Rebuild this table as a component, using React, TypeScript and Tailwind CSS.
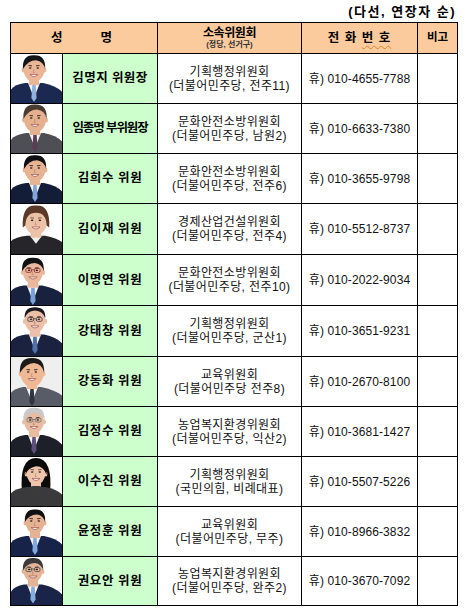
import React from "react";

type Photo = {
  hx: number;
  hy: number;
  skin: string;
  hair: string;
  style: "short" | "bob" | "long" | "thin";
  suit: string;
  tie?: string;
  shirt?: string;
  glasses?: string;
  bg?: string;
  fw?: number;
};

type Row = {
  name: string;
  track: string;
  c1: string;
  c2: string;
  phone: string;
  h: string;
  photo: Photo;
};

function Portrait({ p }: { p: Photo }) {
  const { hx, hy, skin, hair, style, suit } = p;
  const fw = p.fw ?? 10;
  const fh = fw * 1.22;
  const female = style === "bob" || style === "long";
  return (
    <svg viewBox="0 0 51 49" className="block h-full w-full" preserveAspectRatio="xMidYMid slice">
      <rect x="0" y="0" width="51" height="49" fill={p.bg ?? "#ffffff"} />
      {style === "long" && (
        <path
          d={`M${hx - 14} ${hy + 20} Q${hx - 17} ${hy - 15} ${hx} ${hy - 15} Q${hx + 17} ${hy - 15} ${hx + 14} ${hy + 20} Z`}
          fill={hair}
        />
      )}
      <path
        d={`M-2 49 L-2 40 Q0 ${hy + 16} ${hx - 9} ${hy + 14} L${hx + 9} ${hy + 14} Q${hx + 24} ${hy + 17} 53 40 L53 49 Z`}
        fill={suit}
      />
      {!female && (
        <>
          <path d={`M${hx - 6} ${hy + 14} L${hx} ${hy + 29} L${hx + 6} ${hy + 14} Z`} fill={p.shirt ?? "#f4f4f4"} />
          <path
            d={`M${hx - 1.7} ${hy + 16} L${hx + 1.7} ${hy + 16} L${hx + 2.6} ${hy + 29} L${hx} ${hy + 33} L${hx - 2.6} ${hy + 29} Z`}
            fill={p.tie ?? "#6f95cf"}
          />
        </>
      )}
      {style === "bob" && (
        <path d={`M${hx - 6} ${hy + 14} L${hx} ${hy + 22} L${hx + 6} ${hy + 14} Z`} fill="#f1efe9" />
      )}
      <rect x={hx - 5} y={hy + 7} width="10" height="9" fill={skin} />
      {style === "long" && <rect x={hx - 6} y={hy + 13} width="12" height="9" rx="3" fill="#3b3b3b" />}
      <ellipse cx={hx - fw - 0.3} cy={hy + 1} rx="1.6" ry="2.6" fill={skin} />
      <ellipse cx={hx + fw + 0.3} cy={hy + 1} rx="1.6" ry="2.6" fill={skin} />
      <ellipse cx={hx} cy={hy} rx={fw} ry={fh} fill={skin} />
      {style === "short" && (
        <path
          d={`M${hx - fw - 0.6} ${hy} Q${hx - fw - 1.5} ${hy - fh - 1.5} ${hx} ${hy - fh - 1} Q${hx + fw + 1.5} ${hy - fh - 1.5} ${hx + fw + 0.6} ${hy} Q${hx + fw - 1} ${hy - fh + 5} ${hx + 2} ${hy - fh + 4} Q${hx - 6} ${hy - fh + 4} ${hx - fw - 0.6} ${hy} Z`}
          fill={hair}
        />
      )}
      {style === "thin" && (
        <path
          d={`M${hx - fw} ${hy - 2} Q${hx - fw - 1} ${hy - fh - 0.5} ${hx} ${hy - fh - 0.5} Q${hx + fw + 1} ${hy - fh - 0.5} ${hx + fw} ${hy - 2} Q${hx + fw - 2} ${hy - fh + 3} ${hx} ${hy - fh + 2.5} Q${hx - fw + 2} ${hy - fh + 3} ${hx - fw} ${hy - 2} Z`}
          fill={hair}
        />
      )}
      {style === "bob" && (
        <path
          d={`M${hx - fw - 2} ${hy + 6} Q${hx - fw - 3} ${hy - fh - 3} ${hx} ${hy - fh - 2} Q${hx + fw + 3} ${hy - fh - 3} ${hx + fw + 2} ${hy + 6} L${hx + fw - 0.5} ${hy + 4} Q${hx + fw - 1} ${hy - fh + 5} ${hx} ${hy - fh + 5} Q${hx - fw + 1} ${hy - fh + 5} ${hx - fw + 0.5} ${hy + 4} Z`}
          fill={hair}
        />
      )}
      {style === "long" && (
        <path
          d={`M${hx - fw - 1} ${hy + 2} Q${hx - fw - 1} ${hy - fh - 2} ${hx + 1} ${hy - fh - 2} Q${hx + fw + 2} ${hy - fh - 1} ${hx + fw + 1} ${hy + 2} Q${hx + fw - 2} ${hy - fh + 4} ${hx - 1} ${hy - fh + 5} Q${hx - fw + 1} ${hy - 5} ${hx - fw - 1} ${hy + 2} Z`}
          fill={hair}
        />
      )}
      <ellipse cx={hx - 3.8} cy={hy - 1} rx="1.3" ry="0.8" fill="#2a1e1a" />
      <ellipse cx={hx + 3.8} cy={hy - 1} rx="1.3" ry="0.8" fill="#2a1e1a" />
      <path d={`M${hx - 5.5} ${hy - 3.5} L${hx - 2} ${hy - 3.2} M${hx + 2} ${hy - 3.2} L${hx + 5.5} ${hy - 3.5}`} stroke={female ? "#6b4b3b" : "#2a1e1a"} strokeWidth="0.9" />
      <path d={`M${hx} ${hy} L${hx - 0.8} ${hy + 3.5} L${hx + 0.8} ${hy + 3.5}`} stroke="#b07a62" strokeWidth="0.6" fill="none" />
      <path
        d={`M${hx - 4} ${hy + 5.5} Q${hx} ${hy + 9.5} ${hx + 4} ${hy + 5.5} Z`}
        fill="#fafafa"
        stroke="#a3524a"
        strokeWidth="0.7"
      />
      {p.glasses && (
        <g fill="none" stroke={p.glasses} strokeWidth="0.8">
          <rect x={hx - 7} y={hy - 2.8} width="5.6" height="3.8" rx="1.2" />
          <rect x={hx + 1.4} y={hy - 2.8} width="5.6" height="3.8" rx="1.2" />
          <path d={`M${hx - 1.4} ${hy - 1.5} L${hx + 1.4} ${hy - 1.5}`} />
        </g>
      )}
    </svg>
  );
}

const rows: Row[] = [
  {
    name: "김명지 위원장",
    track: "tracking-[0.4px]",
    c1: "기획행정위원회",
    c2: "(더불어민주당, 전주11)",
    phone: "휴) 010-4655-7788",
    h: "h-[50px]",
    photo: { hx: 23, hy: 15, skin: "#e9b796", hair: "#15161a", style: "short", suit: "#1b2850", tie: "#8fb0dc", fw: 10.5 },
  },
  {
    name: "임종명 부위원장",
    track: "tracking-[-1.1px]",
    c1: "문화안전소방위원회",
    c2: "(더불어민주당, 남원2)",
    phone: "휴) 010-6633-7380",
    h: "h-[50px]",
    photo: { hx: 24, hy: 15, skin: "#e4b08e", hair: "#4a3c33", style: "short", suit: "#4e4f55", tie: "#5b3b55", fw: 11 },
  },
  {
    name: "김희수 위원",
    track: "tracking-[0.6px]",
    c1: "문화안전소방위원회",
    c2: "(더불어민주당, 전주6)",
    phone: "휴) 010-3655-9798",
    h: "h-[50px]",
    photo: { hx: 24, hy: 15, skin: "#e7b493", hair: "#101014", style: "short", suit: "#141d38", tie: "#7fa6dc", fw: 10.5 },
  },
  {
    name: "김이재 위원",
    track: "tracking-[0.6px]",
    c1: "경제산업건설위원회",
    c2: "(더불어민주당, 전주4)",
    phone: "휴) 010-5512-8737",
    h: "h-[51px]",
    photo: { hx: 25, hy: 17, skin: "#edc3a8", hair: "#5a3a28", style: "bob", suit: "#26252a", fw: 11 },
  },
  {
    name: "이명연 위원",
    track: "tracking-[0.6px]",
    c1: "문화안전소방위원회",
    c2: "(더불어민주당, 전주10)",
    phone: "휴) 010-2022-9034",
    h: "h-[51px]",
    photo: { hx: 22, hy: 16, skin: "#eab89c", hair: "#121214", style: "short", suit: "#18223f", tie: "#7aa2da", glasses: "#8a2f3a", fw: 10 },
  },
  {
    name: "강태창 위원",
    track: "tracking-[0.6px]",
    c1: "기획행정위원회",
    c2: "(더불어민주당, 군산1)",
    phone: "휴) 010-3651-9231",
    h: "h-[51px]",
    photo: { hx: 24, hy: 14, skin: "#ecc0a8", hair: "#1a1a1e", style: "thin", suit: "#1a2240", tie: "#4f74ad", glasses: "#3a3a3a", fw: 10 },
  },
  {
    name: "강동화 위원",
    track: "tracking-[0.6px]",
    c1: "교육위원회",
    c2: "(더불어민주당 전주8)",
    phone: "휴) 010-2670-8100",
    h: "h-[50px]",
    photo: { hx: 21, hy: 16, skin: "#f0b995", hair: "#1e1a18", style: "short", suit: "#585c66", tie: "#2f3440", bg: "#efefef", fw: 11.5 },
  },
  {
    name: "김정수 위원",
    track: "tracking-[0.6px]",
    c1: "농업복지환경위원회",
    c2: "(더불어민주당, 익산2)",
    phone: "휴) 010-3681-1427",
    h: "h-[50px]",
    photo: { hx: 23, hy: 14, skin: "#e7bca2", hair: "#c9c9c9", style: "short", suit: "#1d1f29", tie: "#5c4f7a", glasses: "#6b6b6b", fw: 10 },
  },
  {
    name: "이수진 위원",
    track: "tracking-[0.6px]",
    c1: "기획행정위원회",
    c2: "(국민의힘, 비례대표)",
    phone: "휴) 010-5507-5226",
    h: "h-[50px]",
    photo: { hx: 25, hy: 16, skin: "#eec4ab", hair: "#0c0b0b", style: "long", suit: "#3a3a3c", fw: 9.5 },
  },
  {
    name: "윤정훈 위원",
    track: "tracking-[0.6px]",
    c1: "교육위원회",
    c2: "(더불어민주당, 무주)",
    phone: "휴) 010-8966-3832",
    h: "h-[50px]",
    photo: { hx: 24, hy: 15, skin: "#e6b392", hair: "#101012", style: "short", suit: "#172349", tie: "#7fa9e0", fw: 9.5 },
  },
  {
    name: "권요안 위원",
    track: "tracking-[0.6px]",
    c1: "농업복지환경위원회",
    c2: "(더불어민주당, 완주2)",
    phone: "휴) 010-3670-7092",
    h: "h-[49px]",
    photo: { hx: 22, hy: 14, skin: "#e5b497", hair: "#3c3a3a", style: "short", suit: "#1a2448", tie: "#86acdc", glasses: "#4a4a4a", fw: 9.5 },
  },
];

export default function App() {
  return (
    <div className="w-[467px] h-[608px] bg-white text-black font-['Liberation_Sans','Noto_Sans_CJK_KR',sans-serif] overflow-hidden">
      <div className="h-[22px] flex items-center justify-end pr-[11px] pt-[1px]">
        <span className="text-[13px] font-bold leading-none tracking-[1.5px]">(다선, 연장자 순)</span>
      </div>
      <div className="ml-[10px] w-[448px] border-t border-l border-black grid grid-cols-[52px_95px_144px_116px_40px]">
        {/* header */}
        <div className="col-span-2 h-[31px] bg-[#fbcb9e] border-r border-b border-black flex items-center justify-center gap-[38px] text-[12.5px] font-bold leading-none pr-[5px]">
          <span>성</span>
          <span>명</span>
        </div>
        <div className="h-[31px] bg-[#fbcb9e] border-r border-b border-black flex flex-col items-center justify-center">
          <span className="text-[12px] font-bold leading-[14px] tracking-[-0.4px]">소속위원회</span>
          <span className="text-[8px] font-bold leading-[10px] text-[#333]">(정당, 선거구)</span>
        </div>
        <div className="h-[31px] bg-[#fbcb9e] border-r border-b border-black flex items-center justify-center text-[12.5px] font-bold leading-none tracking-[1px]">
          <span className="whitespace-pre">
            전 화 <span className="underline decoration-wavy decoration-[#d9822b] decoration-[1px] underline-offset-[3px]">번 호</span>
          </span>
        </div>
        <div className="h-[31px] bg-[#fbcb9e] border-r border-b border-black flex items-center justify-center text-[11.5px] font-bold leading-none">
          비고
        </div>
        {rows.map((r, i) => (
          <React.Fragment key={i}>
            <div className={`${r.h} border-r border-b border-black overflow-hidden bg-white`}>
              <Portrait p={r.photo} />
            </div>
            <div className={`${r.h} border-r border-b border-black bg-[#ccffcc] flex items-center justify-center`}>
              <span className={`text-[12.5px] font-bold leading-none whitespace-pre ${r.track}`}>{r.name}</span>
            </div>
            <div className={`${r.h} border-r border-b border-black flex flex-col items-center justify-center text-[12px] leading-[14px] tracking-[0.4px] text-[#111]`}>
              <span>{r.c1}</span>
              <span>{r.c2}</span>
            </div>
            <div className={`${r.h} border-r border-b border-black flex items-center justify-center text-[12px] leading-none tracking-[0.1px] text-[#111]`}>
              <span className="whitespace-pre">{r.phone}</span>
            </div>
            <div className={`${r.h} border-r border-b border-black`} />
          </React.Fragment>
        ))}
      </div>
    </div>
  );
}
